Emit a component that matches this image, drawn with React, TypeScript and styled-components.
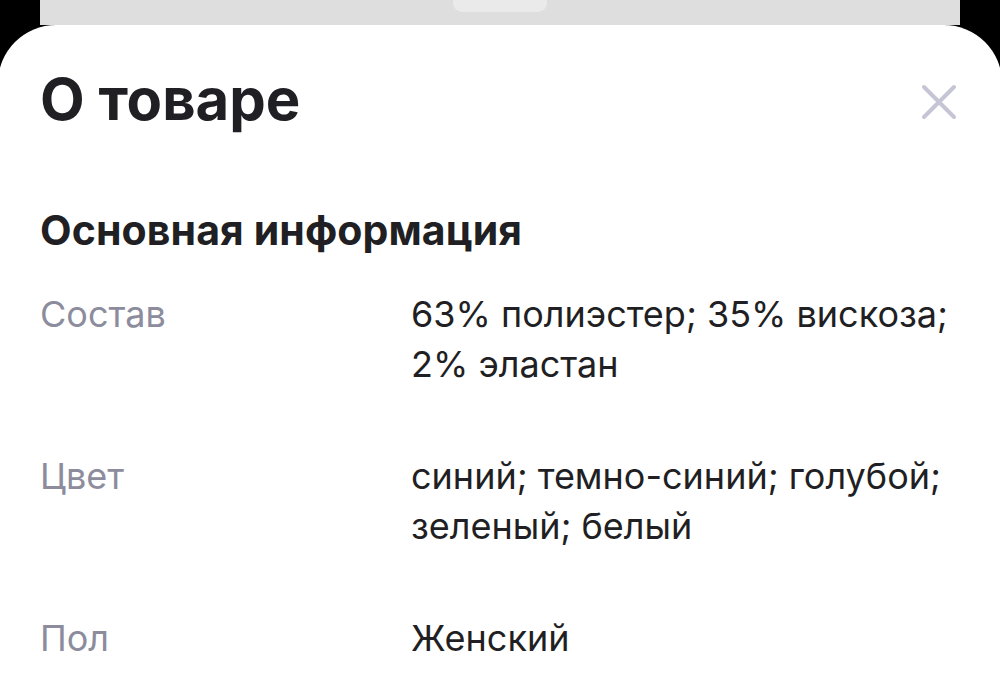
import React from 'react'
import styled, {createGlobalStyle} from 'styled-components'

const GlobalStyle = createGlobalStyle`
    html, body {
        margin: 0;
        padding: 0;
        background: #000;
        overflow: hidden;
    }
    body {
        font-family: Inter, "Noto Sans", "Liberation Sans", sans-serif;
        -webkit-font-smoothing: antialiased;
    }
`;

const Screen = styled.div`
    width: 1000px;
    height: 685px;
    background: #000;
    display: flex;
    flex-direction: column;
    overflow: hidden;
`;

const Backdrop = styled.div`
    height: 25px;
    margin: 0 40px;
    background: #dedede;
    display: flex;
    justify-content: center;
`;

const Handle = styled.span`
    width: 94px;
    height: 12px;
    background: #eaeaea;
    border-radius: 0 0 9px 9px;
`;

const Sheet = styled.section`
    flex: 1;
    margin: 0 -2px;
    background: #fff;
    border-radius: 58px 58px 0 0;
    padding: 39px 45px 0 42px;
`;

const Header = styled.header`
    display: flex;
    justify-content: space-between;
    align-items: center;
`;

const Title = styled.h1`
    margin: 0;
    font-size: 58px;
    line-height: 70px;
    font-weight: 700;
    color: #1f1f24;
`;

const CloseButton = styled.button`
    width: 36px;
    height: 36px;
    padding: 0;
    border: none;
    background: transparent;
    cursor: pointer;
    display: flex;
    margin-top: 6px;
`;

const SectionTitle = styled.h2`
    margin: 72px 0 0;
    font-size: 41px;
    line-height: 48px;
    font-weight: 700;
    color: #1f1f24;
    letter-spacing: 0.1px;
`;

const Specs = styled.dl`
    margin: 35px 0 0;
    display: flex;
    flex-direction: column;
    gap: 62px;
`;

const Row = styled.div`
    display: grid;
    grid-template-columns: 371px 550px;
    font-size: 36px;
    line-height: 50px;
`;

const Label = styled.dt`
    margin: 0;
    color: #8c8c9d;
`;

const Value = styled.dd`
    margin: 0;
    color: #1f1f24;
`;

const specs = [
    {label: 'Состав', value: '63% полиэстер; 35% вискоза; 2% эластан'},
    {label: 'Цвет', value: 'синий; темно-синий; голубой; зеленый; белый'},
    {label: 'Пол', value: 'Женский'},
];

function CloseIcon() {
    return <svg width="36" height="36" viewBox="0 0 36 36" fill="none">
        <path d="M3 3L33 33M33 3L3 33" stroke="#c5c5d5" strokeWidth="4" strokeLinecap="round"/>
    </svg>
}

export default function App(): JSX.Element {
    return <Screen>
        <GlobalStyle/>
        <Backdrop>
            <Handle/>
        </Backdrop>
        <Sheet>
            <Header>
                <Title>О товаре</Title>
                <CloseButton aria-label="Закрыть"><CloseIcon/></CloseButton>
            </Header>
            <SectionTitle>Основная информация</SectionTitle>
            <Specs>
                {specs.map(s => <Row key={s.label}>
                    <Label>{s.label}</Label>
                    <Value>{s.value}</Value>
                </Row>)}
            </Specs>
        </Sheet>
    </Screen>
}
